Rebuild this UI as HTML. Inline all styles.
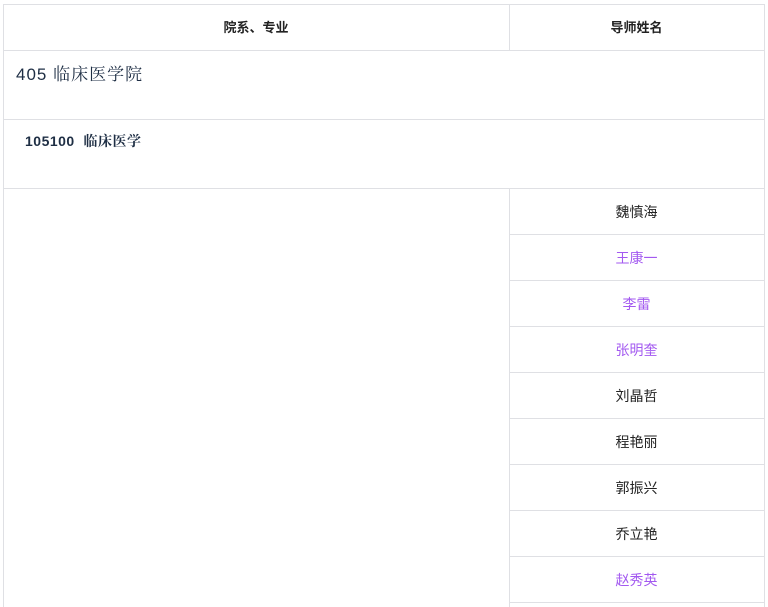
<!DOCTYPE html>
<html><head><meta charset="utf-8"><style>
body{margin:0;background:#fff;width:768px;height:607px;overflow:hidden;position:relative;font-family:"Liberation Sans","Noto Sans CJK SC",sans-serif;}
.h{position:absolute;background:#dfe0e4;height:1px}
.v{position:absolute;background:#dfe0e4;width:1px}
.t{position:absolute;font-size:14px;color:#222;text-align:center;line-height:16px}
.p{color:#a359f0}
</style></head><body>
<div class="h" style="left:3px;width:762px;top:4px"></div>
<div class="h" style="left:3px;width:762px;top:50px"></div>
<div class="h" style="left:3px;width:762px;top:119px"></div>
<div class="h" style="left:3px;width:762px;top:188px"></div>
<div class="v" style="left:3px;top:4px;height:603px"></div>
<div class="v" style="left:764px;top:4px;height:603px"></div>
<div class="v" style="left:509px;top:4px;height:46px"></div>
<div class="v" style="left:509px;top:188px;height:419px"></div>
<div class="h" style="left:509px;width:256px;top:234px"></div>
<div class="h" style="left:509px;width:256px;top:280px"></div>
<div class="h" style="left:509px;width:256px;top:326px"></div>
<div class="h" style="left:509px;width:256px;top:372px"></div>
<div class="h" style="left:509px;width:256px;top:418px"></div>
<div class="h" style="left:509px;width:256px;top:464px"></div>
<div class="h" style="left:509px;width:256px;top:510px"></div>
<div class="h" style="left:509px;width:256px;top:556px"></div>
<div class="h" style="left:509px;width:256px;top:602px"></div>
<div class="t" style="left:3px;width:506px;top:20px;font-weight:bold;font-size:13px">院系、专业</div>
<div class="t" style="left:509px;width:255px;top:20px;font-weight:bold;font-size:13px">导师姓名</div>
<div style="position:absolute;left:16px;top:60px;font-size:17px;color:#1e2e44;font-family:'Liberation Sans','Noto Serif CJK SC',serif;letter-spacing:1px">405 临床医学院</div>
<div style="position:absolute;left:25px;top:131px;font-size:14px;font-weight:bold;color:#1e2e44;font-family:'Liberation Sans','Noto Serif CJK SC',serif;letter-spacing:0.5px">105100&nbsp; 临床医学</div>
<div class="t" style="left:509px;width:255px;top:204px">魏慎海</div>
<div class="t p" style="left:509px;width:255px;top:250px">王康一</div>
<div class="t p" style="left:509px;width:255px;top:296px">李雷</div>
<div class="t p" style="left:509px;width:255px;top:342px">张明奎</div>
<div class="t" style="left:509px;width:255px;top:388px">刘晶哲</div>
<div class="t" style="left:509px;width:255px;top:434px">程艳丽</div>
<div class="t" style="left:509px;width:255px;top:480px">郭振兴</div>
<div class="t" style="left:509px;width:255px;top:526px">乔立艳</div>
<div class="t p" style="left:509px;width:255px;top:572px">赵秀英</div>
</body></html>
